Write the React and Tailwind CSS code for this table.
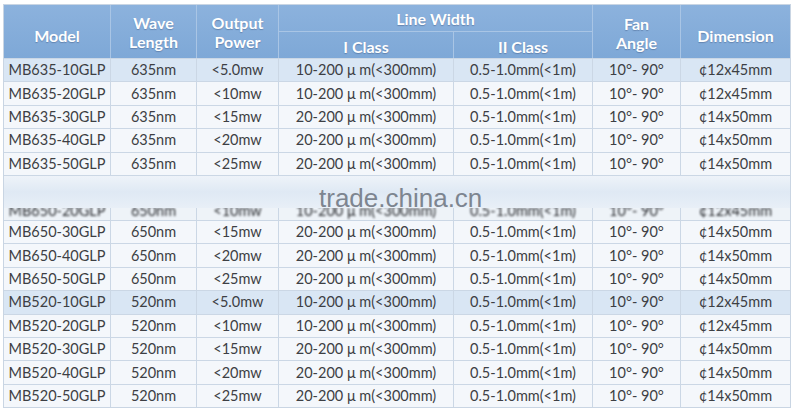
import React from "react";

const cols = "grid-cols-[107px_86px_82px_175px_139px_88px_109px]";

const rows = [
  { model: "MB635-10GLP", wave: "635nm", power: "<5.0mw", one: "10-200", dim: "12x45", hi: true },
  { model: "MB635-20GLP", wave: "635nm", power: "<10mw", one: "10-200", dim: "12x45" },
  { model: "MB635-30GLP", wave: "635nm", power: "<15mw", one: "20-200", dim: "14x50" },
  { model: "MB635-40GLP", wave: "635nm", power: "<20mw", one: "20-200", dim: "14x50" },
  { model: "MB635-50GLP", wave: "635nm", power: "<25mw", one: "20-200", dim: "14x50" },
];

const rows2 = [
  { model: "MB650-30GLP", wave: "650nm", power: "<15mw", one: "20-200", dim: "14x50" },
  { model: "MB650-40GLP", wave: "650nm", power: "<20mw", one: "20-200", dim: "14x50" },
  { model: "MB650-50GLP", wave: "650nm", power: "<25mw", one: "20-200", dim: "14x50" },
  { model: "MB520-10GLP", wave: "520nm", power: "<5.0mw", one: "10-200", dim: "12x45", hi: true },
  { model: "MB520-20GLP", wave: "520nm", power: "<10mw", one: "10-200", dim: "12x45" },
  { model: "MB520-30GLP", wave: "520nm", power: "<15mw", one: "20-200", dim: "14x50" },
  { model: "MB520-40GLP", wave: "520nm", power: "<20mw", one: "20-200", dim: "14x50" },
  { model: "MB520-50GLP", wave: "520nm", power: "<25mw", one: "20-200", dim: "14x50" },
];

const cellsOf = (r) => [
  r.model,
  r.wave,
  r.power,
  `${r.one} μ m(<300mm)`,
  "0.5-1.0mm(<1m)",
  "10°- 90°",
  `¢${r.dim}mm`,
];

const HeadCell = ({ className = "", children }) => (
  <div
    className={`flex items-center justify-center text-center leading-[19px] border-r border-[#a9c5e5] [text-shadow:0_1px_1px_rgba(40,60,100,0.35)] ${className}`}
  >
    {children}
  </div>
);

const Row = ({ r }) => (
  <div
    className={`grid ${cols} h-[23.4px] border-t border-[#cbd7e5] ${
      r.hi ? "bg-[#d9e6f4]" : "bg-[#f4f7fb]"
    }`}
  >
    {cellsOf(r).map((c, i) => (
      <div
        key={i}
        className="flex items-center justify-center whitespace-nowrap border-r border-[#cbd7e5] last:border-r-0"
      >
        {c}
      </div>
    ))}
  </div>
);

export default function App() {
  const blurred = cellsOf({
    model: "MB650-20GLP",
    wave: "650nm",
    power: "<10mw",
    one: "10-200",
    dim: "12x45",
  });

  return (
    <div className="w-[800px] h-[409px] bg-white pt-[4px] pl-[3px] font-['Lato',sans-serif]">
      <div className="relative w-[788px] border border-[#c9d5e3] text-[14.5px] text-[#3d3f44]">
        <div
          className={`grid ${cols} grid-rows-[27px_26px] bg-gradient-to-b from-[#8cb2dd] to-[#7ea8d7] text-white font-bold text-[16px]`}
        >
          <HeadCell className="row-span-2 pt-[7px]">Model</HeadCell>
          <HeadCell className="row-span-2">
            Wave
            <br />
            Length
          </HeadCell>
          <HeadCell className="row-span-2">
            Output
            <br />
            Power
          </HeadCell>
          <HeadCell className="col-span-2 border-b">Line Width</HeadCell>
          <HeadCell className="row-span-2 pt-[3px]">
            Fan
            <br />
            Angle
          </HeadCell>
          <HeadCell className="row-span-2 border-r-0 pt-[7px]">Dimension</HeadCell>
          <HeadCell className="pt-[2px]">I Class</HeadCell>
          <HeadCell className="pt-[2px]">II Class</HeadCell>
        </div>

        {rows.map((r) => (
          <Row key={r.model} r={r} />
        ))}

        <div className="relative z-10 mb-[-7px] h-[33px] border-t border-[#cbd7e5] bg-gradient-to-b from-[#eef3f9] via-[#dfe9f4] to-[#e8eff7]" />

        <div className={`grid ${cols} h-[19px] bg-[#eef3f8]`}>
          {blurred.map((c, i) => (
            <div
              key={i}
              className="overflow-hidden border-r border-[#cbd7e5] last:border-r-0"
            >
              <div className="text-center leading-[19px] whitespace-nowrap blur-[1.2px] text-[#2a2c30]">
                {c}
              </div>
            </div>
          ))}
        </div>

        {rows2.map((r) => (
          <Row key={r.model} r={r} />
        ))}

        <div className="absolute z-20 left-[315px] top-[178px] font-['Liberation_Sans',Arial,sans-serif] text-[26px] leading-[30px] text-[#7d8590]">
          trade.china.cn
        </div>
      </div>
    </div>
  );
}
